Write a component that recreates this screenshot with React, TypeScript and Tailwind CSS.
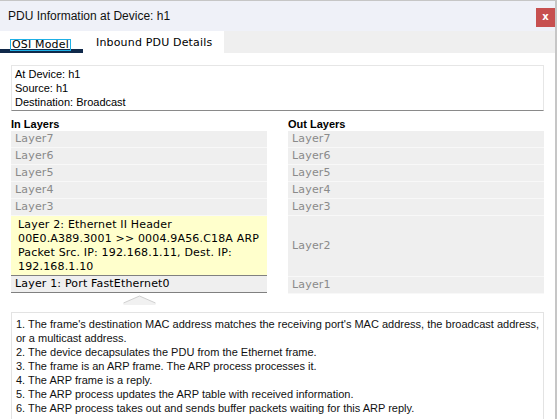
import React from "react";

const VERDANA = "font-['DejaVu_Sans',Verdana,sans-serif] text-[11px] tracking-[0.17px]";
const ARIAL = "font-['Liberation_Sans',Arial,sans-serif] text-[11px]";

const upperLayers = ["Layer7", "Layer6", "Layer5", "Layer4", "Layer3"];

const steps = [
  "2. The device decapsulates the PDU from the Ethernet frame.",
  "3. The frame is an ARP frame. The ARP process processes it.",
  "4. The ARP frame is a reply.",
  "5. The ARP process updates the ARP table with received information.",
  "6. The ARP process takes out and sends buffer packets waiting for this ARP reply.",
];

function GrayRow({ label }: { label: string }) {
  return (
    <div className={`h-[17px] border-b border-[#f8f8f8] bg-[#efefef] pl-[4px] leading-[16px] text-[#8a8a8a] ${VERDANA}`}>
      {label}
    </div>
  );
}

export default function App() {
  return (
    <div className="flex h-[419px] w-[557px] flex-col overflow-hidden border-t border-r-2 border-[#c6c6c6] bg-white">
      {/* title bar */}
      <div className="flex h-[30px] shrink-0 items-center justify-between bg-[#eff1f8] pl-[8px]">
        <span className="font-['Liberation_Sans',Arial,sans-serif] text-[12px] text-[#111]">
          PDU Information at Device: h1
        </span>
        <button className="mt-[2px] flex h-[19px] w-[19px] items-center justify-center bg-[#c75050] font-['DejaVu_Sans',sans-serif] text-[10px] font-bold leading-none text-white">
          x
        </button>
      </div>

      {/* tabs */}
      <div className="flex h-[22px] shrink-0 bg-[#efefef]">
        <div className={`w-[83px] border-b-4 border-[#10294a] bg-white pl-[10px] pt-[6px] ${VERDANA}`}>
          <span className="inline-block h-[12px] border border-[#1fb0e5] px-[1px] leading-[10px] text-black">
            OSI Model
          </span>
        </div>
        <div className={`w-[141px] bg-white pl-[13px] pt-[5px] leading-[14px] text-black ${VERDANA}`}>
          Inbound PDU Details
        </div>
      </div>

      {/* body */}
      <div className="flex flex-1 flex-col px-[11px] pt-[12px]">
        <div className={`border border-[#e6e6e6] border-b-[#8a8a8a] px-[3px] py-[1px] leading-[14px] text-black ${ARIAL}`}>
          <div>At Device: h1</div>
          <div>Source: h1</div>
          <div>Destination: Broadcast</div>
        </div>

        <div className="mt-[6px] grid grid-cols-2 gap-x-[21px]">
          {/* in layers */}
          <div className="flex flex-col">
            <div className={`h-[14px] font-bold leading-[14px] text-black ${ARIAL}`}>In Layers</div>
            {upperLayers.map((l) => (
              <GrayRow key={l} label={l} />
            ))}
            <div className={`h-[59px] bg-[#ffffcc] pl-[7px] pt-[2px] leading-[14px] whitespace-nowrap text-black ${VERDANA}`}>
              <div>Layer 2: Ethernet II Header</div>
              <div>00E0.A389.3001 &gt;&gt; 0004.9A56.C18A ARP</div>
              <div>Packet Src. IP: 192.168.1.11, Dest. IP:</div>
              <div>192.168.1.10</div>
            </div>
            <div className={`h-[18px] border-y border-[#808080] bg-[#efefef] pl-[4px] leading-[16px] text-black ${VERDANA}`}>
              Layer 1: Port FastEthernet0
            </div>
            <div className="mt-[2px] flex justify-center">
              <svg width="33" height="10" viewBox="0 0 33 10">
                <polygon points="0.5,8 16.5,1 32.5,8 32.5,10 0.5,10" fill="#f1f1f1" />
                <polyline points="0.5,8 16.5,1 32.5,8" fill="none" stroke="#cfcfcf" strokeWidth="1" />
              </svg>
            </div>
          </div>

          {/* out layers */}
          <div className="flex flex-col">
            <div className={`h-[14px] font-bold leading-[14px] text-black ${ARIAL}`}>Out Layers</div>
            {upperLayers.map((l) => (
              <GrayRow key={l} label={l} />
            ))}
            <div className={`flex h-[61px] items-center border-b border-[#f8f8f8] bg-[#efefef] pl-[4px] text-[#8a8a8a] ${VERDANA}`}>
              Layer2
            </div>
            <GrayRow label="Layer1" />
          </div>
        </div>

        <div className={`mt-[7px] min-h-[140px] border border-[#e3e3e3] px-[4px] pt-[4px] leading-[14px] whitespace-nowrap text-[#111] ${ARIAL}`}>
          <div>
            1. The frame's destination MAC address matches the receiving port's MAC address, the broadcast address,
          </div>
          <div>or a multicast address.</div>
          {steps.map((s) => (
            <div key={s}>{s}</div>
          ))}
        </div>
      </div>
    </div>
  );
}
